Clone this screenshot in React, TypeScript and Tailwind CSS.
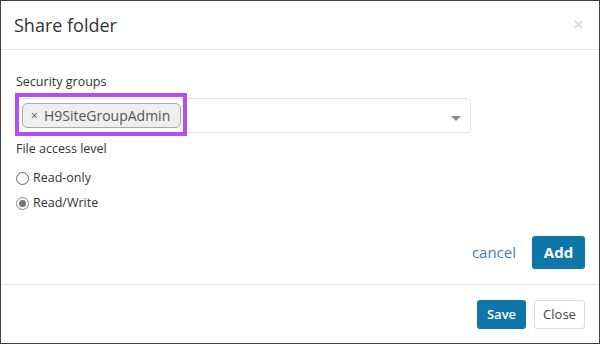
import React from "react";

export default function App() {
  return (
    <div
      className="w-[600px] h-[344px] bg-white border border-[#3f3f3f] flex flex-col text-[#333]"
      style={{ fontFamily: '"Open Sans", "Noto Sans", sans-serif' }}
    >
      <div className="h-[49px] shrink-0 flex items-center justify-between pl-[13px] pr-[15px] border-b border-[#e5e5e5]">
        <div className="text-[18px] text-[#333] leading-none -mt-[1px]">Share folder</div>
        <svg width="9" height="9" viewBox="0 0 9 9" className="mr-[1px] -mt-[1px]">
          <path d="M1 1 L8 8 M8 1 L1 8" stroke="#cfcfcf" strokeWidth="1.6" />
        </svg>
      </div>
      <div className="flex-1 flex flex-col px-[14px] pt-[24px] border-b border-[#dde3e8]">
        <div className="text-[12.5px] leading-[16px] pl-[1px]">Security groups</div>
        <div className="relative mt-[8px] w-[456px] h-[35px] border border-[#e3e3e3] rounded-[4px] flex items-center pl-[6px]">
          <div className="h-[25px] w-[159px] flex items-center bg-[#efefef] border border-[#aaa] rounded-[5px] pl-[8px] text-[#555] text-[14px]">
            <span className="text-[12px] mr-[6px]">×</span>
            <span>H9SiteGroupAdmin</span>
          </div>
          <svg width="10" height="6" viewBox="0 0 10 6" className="absolute right-[9px] top-[17px]">
            <path d="M0 0 L10 0 L5 5 Z" fill="#8a8a8a" />
          </svg>
          <div className="absolute left-[-1px] top-[-6px] w-[172px] h-[43px] border-[4px] border-[#b64cf6] pointer-events-none" />
        </div>
        <div className="text-[12.5px] leading-[16px] mt-[8px] pl-[1px]">File access level</div>
        <div className="mt-[12px] flex items-center gap-[4px] pl-[1px]">
          <span className="w-[13px] h-[13px] rounded-full border border-[#666] bg-white" />
          <span className="text-[12.5px]">Read-only</span>
        </div>
        <div className="mt-[6px] flex items-center gap-[4px] pl-[1px]">
          <span className="w-[13px] h-[13px] rounded-full border border-[#888] bg-white flex items-center justify-center">
            <span className="w-[7px] h-[7px] rounded-full bg-[#757575]" />
          </span>
          <span className="text-[12.5px]">Read/Write</span>
        </div>
        <div className="flex-1" />
        <div className="flex items-center justify-end gap-[16px] pb-[15px] pr-[0px]">
          <span className="text-[15px] text-[#3c7fbd]">cancel</span>
          <button className="w-[53px] h-[33px] bg-[#0f76a8] rounded-[3px] text-white text-[15px] font-bold">Add</button>
        </div>
      </div>
      <div className="h-[58px] shrink-0 flex items-center justify-end gap-[8px] pr-[14px] pt-[1px]">
        <button className="w-[49px] h-[29px] bg-[#0f76a8] rounded-[3px] text-white text-[13px] font-semibold">Save</button>
        <button className="w-[51px] h-[29px] bg-white border border-[#dcdcdc] rounded-[3px] text-[#444] text-[13px]">Close</button>
      </div>
    </div>
  );
}
